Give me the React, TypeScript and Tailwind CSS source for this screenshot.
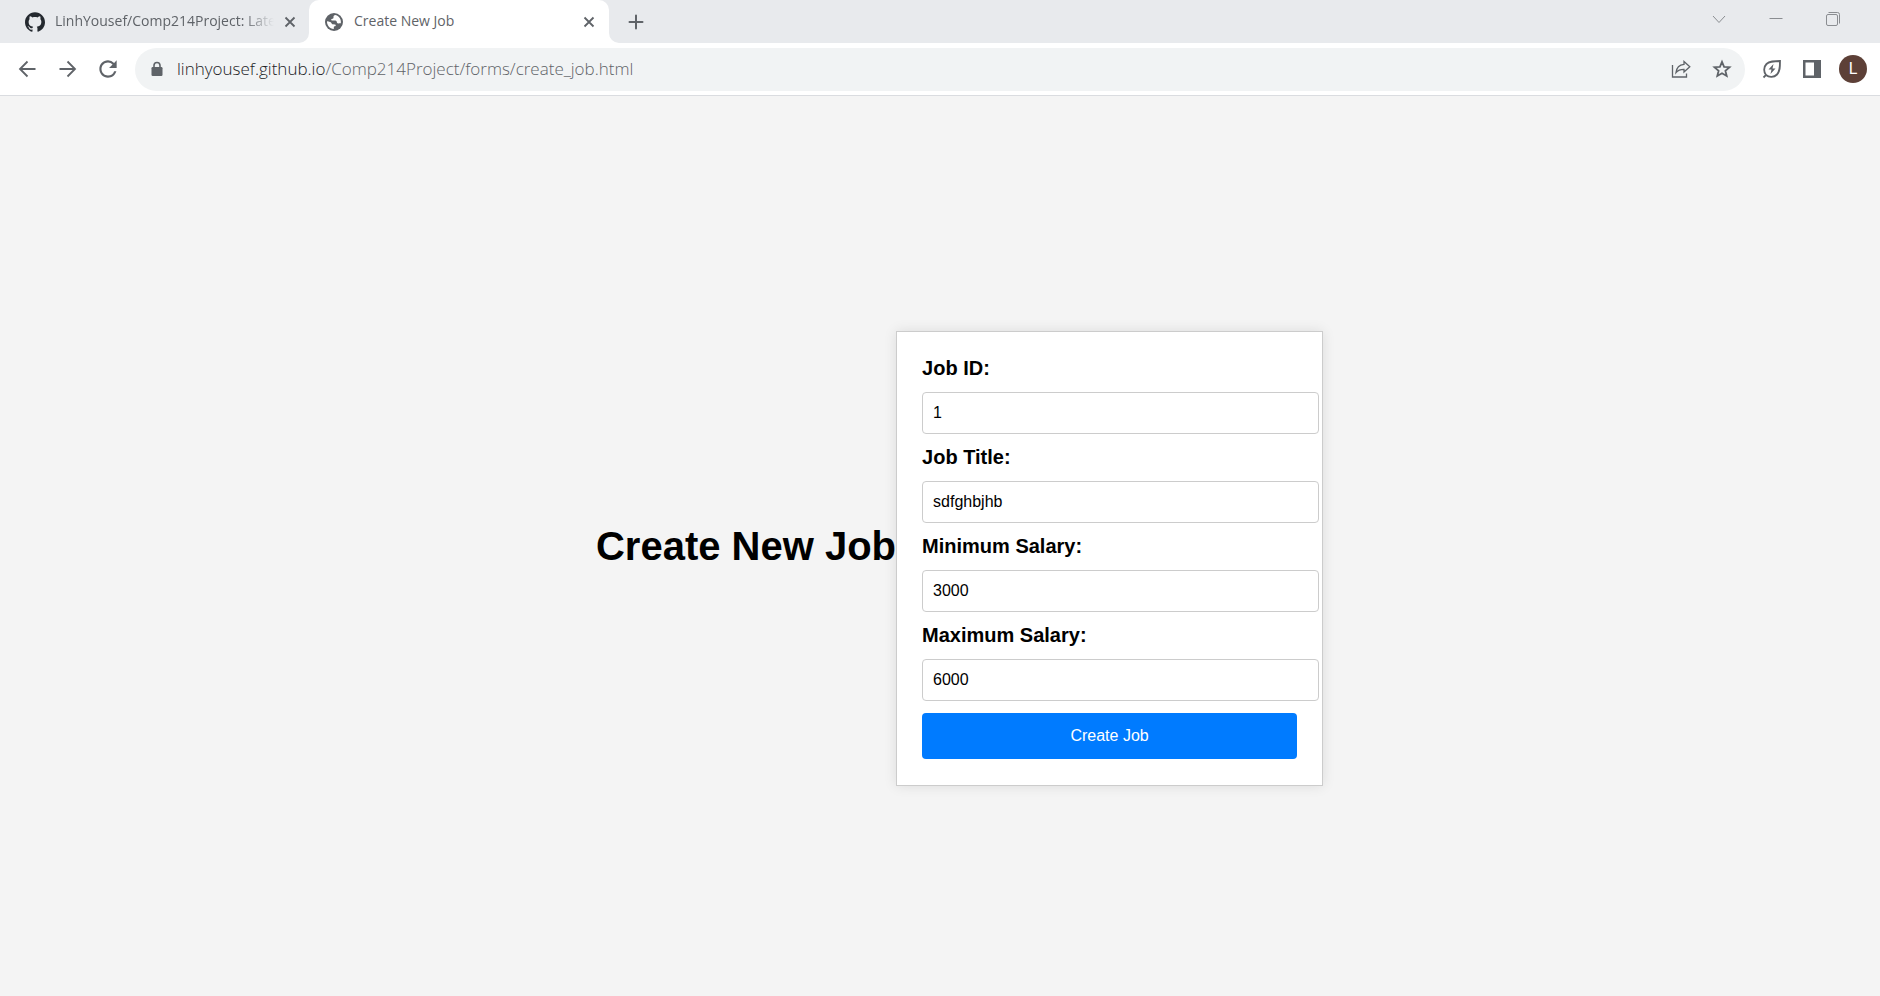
import React, { useState } from "react";
import { SiGithub } from "react-icons/si";
import { MdRefresh } from "react-icons/md";

const chromeFont = "font-['Open_Sans','Noto_Sans',sans-serif]";

type TabProps = { icon: React.ReactNode; title: string; active?: boolean };

function Flare({ side }: { side: "left" | "right" }) {
  return (
    <svg
      viewBox="0 0 10 10"
      aria-hidden="true"
      className={side === "left" ? "absolute bottom-0 -left-[10px] size-[10px]" : "absolute bottom-0 -right-[10px] size-[10px]"}
    >
      <path d={side === "left" ? "M10 0V10H0A10 10 0 0 0 10 0Z" : "M0 0V10H10A10 10 0 0 1 0 0Z"} fill="#fff" />
    </svg>
  );
}

function GlobeIcon() {
  return (
    <svg viewBox="0 0 20 20" className="size-5 shrink-0" aria-hidden="true">
      <circle cx="10" cy="10" r="9" fill="currentColor" />
      <path
        d="M11.500 3C10 3.200 9.300 4 9.500 5.200C9.700 6.300 8.800 6.800 7.800 7C6.800 7.200 7 8.500 8 8.600H11.200C12.600 8.700 12.800 9.800 13 10.800C13.200 11.600 14.500 11.400 16.800 11.300C17.500 8 15.500 4 11.500 3Z"
        fill="#fff"
      />
      <path
        d="M3 9.200C2.800 13 5.500 16.600 9.800 17V15.300C9.800 14.600 10.400 14.400 11 14.300C12 14 12 12.700 11 12.500L8.800 12.300C8 12.200 7.800 11.500 7.400 10.900C6.900 10 5.500 9.500 3 9.200Z"
        fill="#fff"
      />
    </svg>
  );
}

function Tab({ icon, title, active }: TabProps) {
  return (
    <div
      className={
        active
          ? "relative flex h-full w-[300px] items-center rounded-t-[10px] bg-white pl-[15px] pr-3"
          : "flex h-full w-[300px] items-center pl-4 pr-[11px]"
      }
    >
      {active && <Flare side="left" />}
      {icon}
      <span
        className={
          active
            ? "ml-[10px] flex-1 overflow-hidden whitespace-nowrap pb-[2px] text-[14px]"
            : "ml-[10px] flex-1 overflow-hidden whitespace-nowrap pb-[2px] text-[14px] [mask-image:linear-gradient(to_right,black_86%,transparent)]"
        }
      >
        {title}
      </span>
      <button type="button" aria-label={"Close " + title} className="ml-2 flex size-4 items-center justify-center">
        <svg viewBox="0 0 16 16" className="size-4" fill="none" stroke="currentColor" strokeWidth="1.800">
          <path d="M3.500 3.500L12.500 12.500M12.500 3.500L3.500 12.500" />
        </svg>
      </button>
      {active && <Flare side="right" />}
    </div>
  );
}

function WindowControls() {
  return (
    <div className="ml-auto flex items-center gap-[43px] pr-10 pb-[6px] text-[#8a8d91]">
      <button type="button" aria-label="Search tabs">
        <svg viewBox="0 0 14 14" className="size-[14px]" fill="none" stroke="currentColor">
          <path d="M1 4L7 10.500L13 4" />
        </svg>
      </button>
      <button type="button" aria-label="Minimize">
        <svg viewBox="0 0 14 14" className="size-[14px]" fill="none" stroke="currentColor">
          <path d="M0.500 6.500H13.500" />
        </svg>
      </button>
      <button type="button" aria-label="Restore">
        <svg viewBox="0 0 14 14" className="size-[14px]" fill="none" stroke="currentColor">
          <rect x="0.500" y="2.500" width="11" height="11" rx="1.500" />
          <path d="M2.500 0.500H11.500A2 2 0 0 1 13.500 2.500V11.500" />
        </svg>
      </button>
    </div>
  );
}

function Toolbar() {
  return (
    <div className="flex h-[53px] items-center border-b border-[#dadce0] bg-white pl-[15px] pr-[13px] text-[#5f6368]">
      <div className="flex items-center gap-4">
        <button type="button" aria-label="Back">
          <svg viewBox="0 0 24 24" className="size-6" fill="none" stroke="currentColor" strokeWidth="1.800">
            <path d="M20.500 12H5.500M12.500 4.500L5 12L12.500 19.500" />
          </svg>
        </button>
        <button type="button" aria-label="Forward">
          <svg viewBox="0 0 24 24" className="size-6" fill="none" stroke="currentColor" strokeWidth="1.800">
            <path d="M4.500 12H19.500M12.500 4.500L20 12L12.500 19.500" />
          </svg>
        </button>
        <button type="button" aria-label="Reload"><MdRefresh className="size-[26px]" /></button>
      </div>
      <div className="ml-[14px] flex h-[43px] flex-1 items-center rounded-full bg-[#f1f3f4] pl-[14px] pr-3">
        <svg viewBox="0 0 16 16" className="size-4" fill="none" aria-hidden="true">
          <rect x="2.500" y="6" width="11" height="9" rx="1.200" fill="currentColor" />
          <path d="M5 7V4.500A3 3 0 0 1 11 4.500V7" stroke="currentColor" strokeWidth="1.600" />
        </svg>
        <a href="#" className="ml-3 flex-1 whitespace-nowrap text-[17px] font-light">
          <span className="text-[#202124]">linhyousef.github.io</span>/Comp214Project/forms/create_job.html
        </a>
        <button type="button" aria-label="Share" className="mr-5">
          <svg viewBox="0 0 20 20" className="size-5" fill="none" stroke="currentColor" strokeWidth="1.300">
            <path d="M1.500 6V18H15.500V14.500" />
            <path d="M13 2.500L18.800 7.800L13 13V10.300C9.500 10.300 7 11 5 13.500C5.500 9 8 5.700 13 5.300Z" />
          </svg>
        </button>
        <button type="button" aria-label="Bookmark">
          <svg viewBox="0 0 22 22" className="size-[22px]" fill="none" stroke="currentColor" strokeWidth="1.800">
            <path d="M11 3.800L13.100 8.800L18.500 9.200L14.400 12.700L15.700 18L11 15.200L6.300 18L7.600 12.700L3.500 9.200L8.900 8.800Z" />
          </svg>
        </button>
      </div>
      <div className="ml-[17px] flex items-center gap-5">
        <button type="button" aria-label="Energy Saver">
          <svg viewBox="0 0 20 20" className="size-5" fill="none" stroke="currentColor" strokeWidth="1.800">
            <path d="M1.500 18.500L4 16C1.500 13 1.500 8 4.500 5C7.500 2 12 2 18 2C18 8 18 12.500 15 15.500C12 18.500 7 18.500 4 16" />
            <path d="M11.500 5L6.500 10.500H9.500L8.500 15L13.500 9.500H10.500Z" fill="currentColor" stroke="none" />
          </svg>
        </button>
        <button type="button" aria-label="Side panel">
          <svg viewBox="0 0 20 20" className="size-5">
            <path d="M1 1H19V19H1ZM3.500 3.500V16.500H12V3.500Z" fill="currentColor" fillRule="evenodd" />
          </svg>
        </button>
      </div>
      <button type="button" aria-label="Profile" className="ml-[17px] flex size-7 items-center justify-center rounded-full bg-[#5d4037] font-[Roboto,sans-serif] text-[16px] text-white">
        L
      </button>
    </div>
  );
}

type FieldProps = { id: string; label: string; initial: string };

function Field({ id, label, initial }: FieldProps) {
  const [value, setValue] = useState(initial);
  return (
    <div className="flex flex-col gap-3">
      <label htmlFor={id} className="text-[20px] leading-[23px] font-bold">{label}</label>
      <input
        id={id}
        type="text"
        value={value}
        onChange={(e) => setValue(e.target.value)}
        className="h-[42px] w-[calc(100%+22px)] rounded-[4px] border border-[#ccc] bg-white px-[10px] text-[16px] outline-none"
      />
    </div>
  );
}

export default function App() {
  return (
    <div className="flex min-h-screen flex-col bg-[#f4f4f4] font-['Liberation_Sans',Arial,sans-serif] text-black">
      <header className={chromeFont}>
        <div className="flex h-[43px] items-center bg-[#e8eaed] pl-[9px] text-[#5f6368]">
          <Tab icon={<SiGithub className="size-5 shrink-0 text-[#24292f]" />} title="LinhYousef/Comp214Project: Late" />
          <Tab active icon={<GlobeIcon />} title="Create New Job" />
          <button type="button" aria-label="New tab" className="ml-4">
            <svg viewBox="0 0 22 22" className="size-[22px]" fill="none" stroke="currentColor" strokeWidth="2" strokeLinecap="round">
              <path d="M11 4.500V17.500M4.500 11H17.500" />
            </svg>
          </button>
          <WindowControls />
        </div>
        <Toolbar />
      </header>
      <main className="flex flex-1 items-center justify-center pl-[39px]">
        <h1 className="text-[40px] leading-[48px] font-bold whitespace-nowrap">Create New Job</h1>
        <form
          onSubmit={(e) => e.preventDefault()}
          className="mt-[25px] flex w-[427px] flex-col gap-3 border border-[#ccc] bg-white px-[25px] pt-[25px] pb-[26px] shadow-[0_0_12px_rgba(0,0,0,0.1)]"
        >
          <Field id="job-id" label="Job ID:" initial="1" />
          <Field id="job-title" label="Job Title:" initial="sdfghbjhb" />
          <Field id="min-salary" label="Minimum Salary:" initial="3000" />
          <Field id="max-salary" label="Maximum Salary:" initial="6000" />
          <button type="submit" className="h-[46px] rounded-[4px] bg-[#007bff] text-[16px] text-white">
            Create Job
          </button>
        </form>
      </main>
    </div>
  );
}
